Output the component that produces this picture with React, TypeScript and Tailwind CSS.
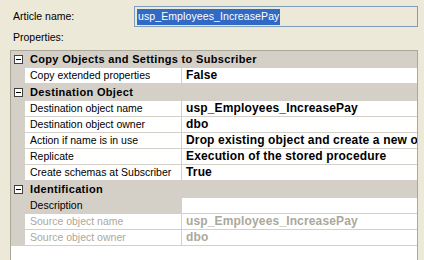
import React from 'react';

type Row =
  | { kind: 'section'; title: string }
  | { kind: 'prop'; name: string; value: string; disabled?: boolean; selected?: boolean };

const rows: Row[] = [
  { kind: 'section', title: 'Copy Objects and Settings to Subscriber' },
  { kind: 'prop', name: 'Copy extended properties', value: 'False' },
  { kind: 'section', title: 'Destination Object' },
  { kind: 'prop', name: 'Destination object name', value: 'usp_Employees_IncreasePay' },
  { kind: 'prop', name: 'Destination object owner', value: 'dbo' },
  { kind: 'prop', name: 'Action if name is in use', value: 'Drop existing object and create a new one' },
  { kind: 'prop', name: 'Replicate', value: 'Execution of the stored procedure' },
  { kind: 'prop', name: 'Create schemas at Subscriber', value: 'True' },
  { kind: 'section', title: 'Identification' },
  { kind: 'prop', name: 'Description', value: '', selected: true },
  { kind: 'prop', name: 'Source object name', value: 'usp_Employees_IncreasePay', disabled: true },
  { kind: 'prop', name: 'Source object owner', value: 'dbo', disabled: true },
];

function MinusBox() {
  return (
    <svg width="9" height="9" viewBox="0 0 9 9" className="shrink-0">
      <rect x="0.5" y="0.5" width="8" height="8" fill="#ffffff" stroke="#404040" />
      <line x1="2" y1="4.5" x2="7" y2="4.5" stroke="#000000" />
    </svg>
  );
}

export default function App() {
  return (
    <div className="w-[424px] h-[260px] bg-[#ECE9D8] overflow-hidden flex flex-col font-['Liberation_Sans',Arial,sans-serif] text-[10.5px] text-black">
      {/* Article name */}
      <div className="flex items-center h-[21px] mt-[6px]">
        <span className="pl-[13px] w-[134px] shrink-0">Article name:</span>
        <div className="w-[284px] h-[21px] border border-[#7F9DB9] bg-[#ECE9D8] flex items-center px-[2px]">
          <span className="bg-[#316AC5] text-white leading-[15px] h-[16px] px-[1px] text-[10.5px] tracking-[0.1px]">usp_Employees_IncreasePay</span>
        </div>
      </div>

      <div className="pl-[13px] mt-[3px] leading-[14px]">Properties:</div>

      {/* Property grid */}
      <div className="ml-[10px] mt-[6px] w-[408px] flex-1 border-l border-t border-r border-[#ACA899] bg-white flex flex-col overflow-hidden">
        {rows.map((r, i) =>
          r.kind === 'section' ? (
            <div key={i} className="h-[17px] shrink-0 bg-[#D4D0C8] flex items-center">
              <div className="w-[14px] flex justify-center pl-[1px]">
                <MinusBox />
              </div>
              <span className="pl-[5px] font-bold text-[11px] tracking-[0.33px] whitespace-nowrap">{r.title}</span>
            </div>
          ) : (
            <div key={i} className="h-[16px] shrink-0 flex">
              <div className="w-[14px] shrink-0 bg-[#D4D0C8]" />
              <div
                className={`w-[157px] shrink-0 border-b border-r border-[#D4D0C8] pl-[5px] leading-[15px] whitespace-nowrap overflow-hidden ${
                  r.selected ? 'bg-[#D4D0C8]' : 'bg-white'
                } ${r.disabled ? 'text-[#ACA899]' : 'text-black'}`}
              >
                {r.name}
              </div>
              <div
                className={`flex-1 border-b border-[#D4D0C8] pl-[4px] leading-[15px] font-bold text-[12px] tracking-[0.15px] whitespace-nowrap overflow-hidden ${
                  r.disabled ? 'text-[#ACA899]' : 'text-black'
                }`}
              >
                {r.value}
              </div>
            </div>
          )
        )}
      </div>
    </div>
  );
}
